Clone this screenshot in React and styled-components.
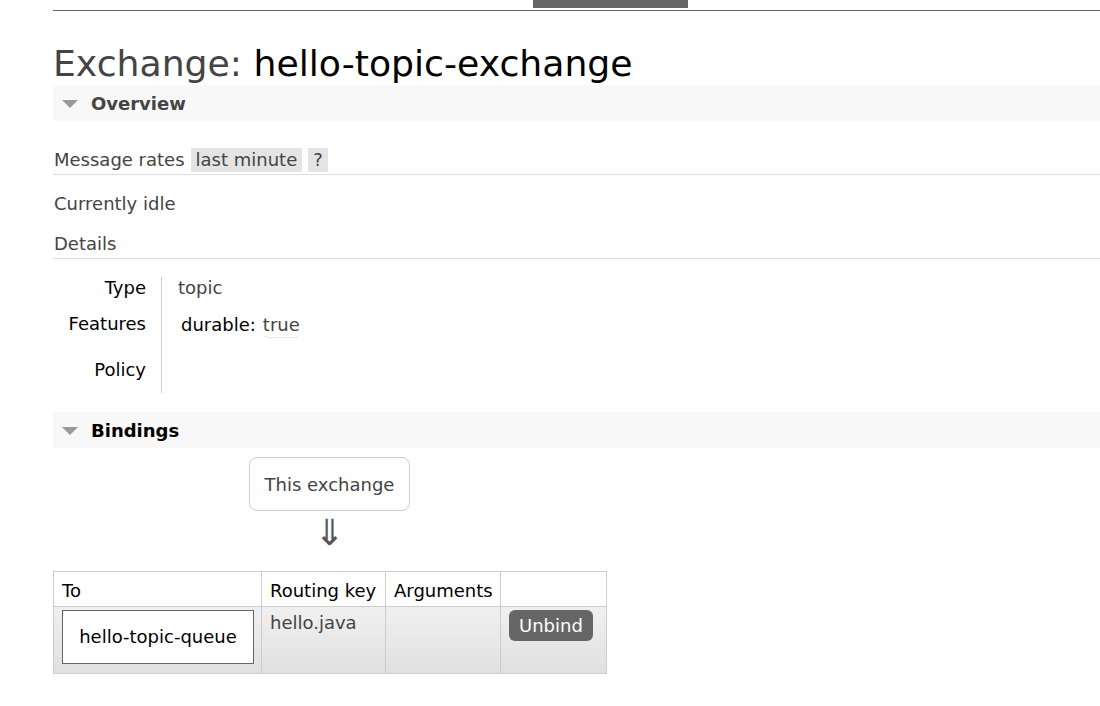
import styled, { createGlobalStyle } from "styled-components";

const GlobalStyle = createGlobalStyle`
  html, body {
    margin: 0;
    padding: 0;
    background: #fff;
  }
  body {
    font-family: "DejaVu Sans", Verdana, sans-serif;
    font-size: 18px;
    color: #444;
    overflow: hidden;
  }
`;

const Page = styled.div`
  width: 1047px;
  margin-left: 53px;
`;

const TopNav = styled.div`
  height: 10px;
  border-bottom: 1px solid #666;
`;

const ActiveTab = styled.div`
  margin-left: 480px;
  width: 155px;
  height: 8px;
  background: #666;
`;

const Title = styled.h1`
  margin: 32px 0 0;
  font-size: 36.2px;
  font-weight: normal;
  line-height: 42px;
  color: #444;
  white-space: nowrap;

  b {
    font-weight: normal;
    color: #000;
  }
`;

const SectionBar = styled.div`
  display: flex;
  align-items: center;
  height: 36px;
  margin-top: ${(p) => p.$top || 0}px;
  background: #f8f8f8;
  font-weight: bold;
  color: ${(p) => p.$color || "#000"};
`;

const Triangle = styled.span`
  width: 0;
  height: 0;
  margin: 2px 13px 0 9px;
  border-left: 8px solid transparent;
  border-right: 8px solid transparent;
  border-top: 8px solid #999;
`;

const RatesRow = styled.div`
  display: flex;
  align-items: center;
  gap: 6px;
  margin-top: 27px;
  padding: 0 0 2px 1px;
  line-height: 24px;
  border-bottom: 1px solid #ddd;
`;

const Pill = styled.span`
  padding: 0 5px;
  background: #e4e4e4;
  color: #444;
`;

const Para = styled.div`
  margin-top: ${(p) => p.$top}px;
  padding-left: 1px;
  line-height: 22px;
`;

const Heading = styled(Para)`
  padding-bottom: 3px;
  border-bottom: 1px solid #ddd;
`;

const Details = styled.div`
  display: flex;
  margin-top: 18px;
`;

const LabelCol = styled.div`
  display: flex;
  flex-direction: column;
  align-items: flex-end;
  width: 93px;
  padding-right: 15px;
  color: #000;
`;

const ValueCol = styled.div`
  display: flex;
  flex-direction: column;
  padding: 0 0 12px 16px;
  border-left: 1px solid #ccc;
`;

const Cell = styled.div`
  height: ${(p) => p.$h}px;
  margin-bottom: ${(p) => p.$gap || 0}px;
  line-height: 22px;
  white-space: nowrap;
`;

const Feature = styled.span`
  margin-left: 3px;
  color: #000;
`;

const Value = styled.span`
  display: inline-block;
  margin-left: 7px;
  line-height: 24px;
  color: #444;
  border-bottom: 1px dotted #ccc;
  border-radius: 0 0 6px 6px;
`;

const Flow = styled.div`
  display: flex;
  flex-direction: column;
  align-items: center;
  width: 161px;
  margin: 9px 0 0 196px;
`;

const NodeBox = styled.div`
  box-sizing: border-box;
  width: 161px;
  height: 54px;
  padding-top: 1px;
  line-height: 52px;
  text-align: center;
  border: 1px solid #ccc;
  border-radius: 8px;
  color: #444;
`;

const Arrow = styled.div`
  margin-top: 3px;
  font-size: 36px;
  line-height: 38px;
  color: #555;
`;

const Table = styled.table`
  margin-top: 19px;
  border-collapse: collapse;
  table-layout: fixed;
  width: 553px;
  color: #000;

  th, td {
    border: 1px solid #ccc;
    padding: 0 8px;
    text-align: left;
    font-weight: normal;
    white-space: nowrap;
    overflow: hidden;
  }

  th {
    height: 32px;
    padding-top: 2px;
    background: #fff;
  }

  tbody tr {
    background: linear-gradient(#f0f0f0, #e0e0e0);
  }

  td {
    height: 63px;
    vertical-align: top;
    padding-top: 3px;
  }
`;

const Col = styled.col`
  width: ${(p) => p.$w}px;
`;

const QueueLink = styled.div`
  box-sizing: border-box;
  width: 192px;
  height: 54px;
  line-height: 52px;
  text-align: center;
  background: #fff;
  border: 1px solid #666;
  color: #000;
`;

const RoutingKey = styled.span`
  display: block;
  line-height: 26px;
  color: #444;
`;

const Button = styled.button`
  font-family: "DejaVu Sans", Verdana, sans-serif;
  font-size: 18px;
  padding: 0 10px;
  height: 31px;
  border: 0;
  border-radius: 6px;
  background: #666;
  color: #fff;
`;

export default function App() {
  return (
    <>
      <GlobalStyle />
      <Page>
        <TopNav>
          <ActiveTab />
        </TopNav>
        <Title>
          Exchange: <b>hello-topic-exchange</b>
        </Title>
        <SectionBar $color="#444">
          <Triangle />
          Overview
        </SectionBar>
        <RatesRow>
          Message rates <Pill>last minute</Pill>
          <Pill>?</Pill>
        </RatesRow>
        <Para $top={18}>Currently idle</Para>
        <Heading $top={18}>Details</Heading>
        <Details>
          <LabelCol>
            <Cell $h={22} $gap={14}>Type</Cell>
            <Cell $h={36} $gap={10}>Features</Cell>
            <Cell $h={22}>Policy</Cell>
          </LabelCol>
          <ValueCol>
            <Cell $h={22} $gap={14}>topic</Cell>
            <Cell $h={36} $gap={10}>
              <Feature>durable:</Feature>
              <Value>true</Value>
            </Cell>
            <Cell $h={22} />
          </ValueCol>
        </Details>
        <SectionBar $top={19}>
          <Triangle />
          Bindings
        </SectionBar>
        <Flow>
          <NodeBox>This exchange</NodeBox>
          <Arrow>⇓</Arrow>
        </Flow>
        <Table>
          <colgroup>
            <Col $w={208} />
            <Col $w={124} />
            <Col $w={115} />
            <Col $w={106} />
          </colgroup>
          <thead>
            <tr>
              <th>To</th>
              <th>Routing key</th>
              <th>Arguments</th>
              <th></th>
            </tr>
          </thead>
          <tbody>
            <tr>
              <td>
                <QueueLink>hello-topic-queue</QueueLink>
              </td>
              <td>
                <RoutingKey>hello.java</RoutingKey>
              </td>
              <td></td>
              <td>
                <Button>Unbind</Button>
              </td>
            </tr>
          </tbody>
        </Table>
      </Page>
    </>
  );
}
